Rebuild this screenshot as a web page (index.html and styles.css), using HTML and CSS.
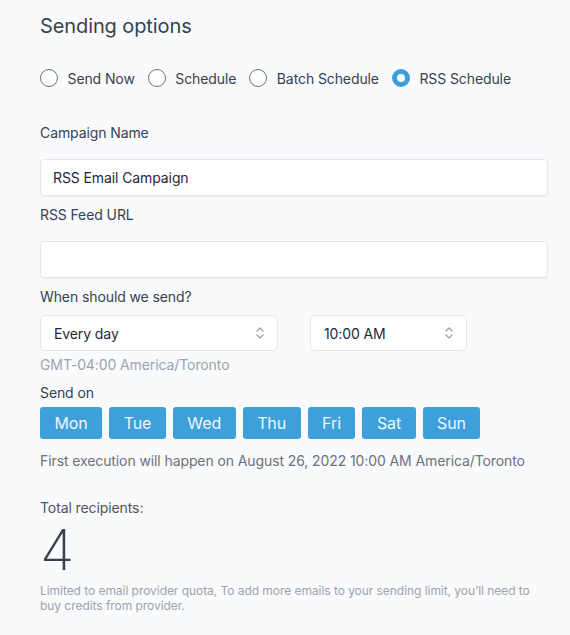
FILE: index.html
```html
<!DOCTYPE html>
<html>
<head>
<meta charset="utf-8">
<link rel="stylesheet" href="styles.css">
</head>
<body>
<div class="page">
  <h2 class="title">Sending options</h2>
  <div class="radios">
    <label class="radio"><span class="dot"></span>Send Now</label>
    <label class="radio"><span class="dot"></span>Schedule</label>
    <label class="radio"><span class="dot"></span>Batch Schedule</label>
    <label class="radio"><span class="dot on"></span>RSS Schedule</label>
  </div>
  <div class="label first">Campaign Name</div>
  <div class="input">RSS Email Campaign</div>
  <div class="label">RSS Feed URL</div>
  <div class="input"></div>
  <div class="label">When should we send?</div>
  <div class="selects">
    <div class="select wide">Every day
      <svg class="chev" width="10" height="14" viewBox="0 0 10 14"><path d="M2 5 L5 2 L8 5 M2 9 L5 12 L8 9" fill="none" stroke="#9ca3af" stroke-width="1.4" stroke-linecap="round" stroke-linejoin="round"/></svg>
    </div>
    <div class="select narrow">10:00 AM
      <svg class="chev" width="10" height="14" viewBox="0 0 10 14"><path d="M2 5 L5 2 L8 5 M2 9 L5 12 L8 9" fill="none" stroke="#9ca3af" stroke-width="1.4" stroke-linecap="round" stroke-linejoin="round"/></svg>
    </div>
  </div>
  <div class="tz">GMT-04:00 America/Toronto</div>
  <div class="label sendon">Send on</div>
  <div class="days">
    <span class="day">Mon</span>
    <span class="day">Tue</span>
    <span class="day">Wed</span>
    <span class="day">Thu</span>
    <span class="day">Fri</span>
    <span class="day">Sat</span>
    <span class="day">Sun</span>
  </div>
  <div class="exec">First execution will happen on August 26, 2022 10:00 AM America/Toronto</div>
  <div class="total">Total recipients:</div>
  <div class="count">4</div>
  <div class="note">Limited to email provider quota, To add more emails to your sending limit, you’ll need to buy credits from provider.</div>
</div>
</body>
</html>
```
FILE: styles.css
```css
html, body {
  margin: 0;
  background: #f9fafb;
}
body {
  font-family: Inter, "Noto Sans", sans-serif;
  color: #374151;
}
.page {
  width: 508px;
  padding: 12px 22px 20px 40px;
}
.title {
  margin: 0;
  font-size: 20px;
  line-height: 28px;
  font-weight: 400;
  letter-spacing: -0.1px;
  color: #374151;
}
.radios {
  margin-top: 26px;
  display: flex;
  align-items: center;
  gap: 13px;
  height: 24px;
}
.radio {
  display: flex;
  align-items: center;
  gap: 9.5px;
  font-size: 14px;
  letter-spacing: -0.1px;
  color: #374151;
}
.dot {
  box-sizing: border-box;
  width: 18px;
  height: 18px;
  border-radius: 50%;
  border: 1px solid #6b7280;
  background: #fff;
}
.dot.on {
  border: 5px solid #3b9fdc;
  background: #fff;
}
.label {
  margin-top: 9px;
  font-size: 14px;
  line-height: 20px;
  letter-spacing: -0.1px;
  color: #374151;
}
.label.first {
  margin-top: 33px;
}
.input {
  box-sizing: border-box;
  margin-top: 16px;
  height: 37px;
  background: #fff;
  border: 1px solid #e5e7eb;
  border-radius: 4px;
  box-shadow: 0 1px 2px rgba(0,0,0,0.05);
  padding: 0 12px;
  display: flex;
  align-items: center;
  font-size: 14px;
  letter-spacing: -0.1px;
  color: #1f2937;
}
.selects {
  margin-top: 8px;
  display: flex;
  gap: 32px;
}
.select {
  box-sizing: border-box;
  height: 36px;
  background: #fff;
  border: 1px solid #e5e7eb;
  border-radius: 5px;
  padding: 0 12px 0 13px;
  display: flex;
  align-items: center;
  justify-content: space-between;
  font-size: 14px;
  letter-spacing: -0.1px;
  color: #1f2937;
}
.select.wide { width: 238px; }
.select.narrow { width: 157px; }
.tz {
  margin-top: 4px;
  font-size: 14px;
  line-height: 20px;
  letter-spacing: -0.1px;
  color: #9ca3af;
}
.label.sendon {
  margin-top: 8px;
}
.days {
  margin-top: 4px;
  display: flex;
  gap: 7px;
}
.day {
  height: 32px;
  padding: 0 14.5px;
  display: flex;
  align-items: center;
  background: #3ea0db;
  border-radius: 3px;
  color: #eef6fc;
  font-size: 16px;
  letter-spacing: -0.1px;
}
.exec {
  margin-top: 12px;
  font-size: 14px;
  line-height: 20px;
  letter-spacing: -0.1px;
  color: #6b7280;
}
.total {
  margin-top: 27px;
  font-size: 14px;
  line-height: 20px;
  letter-spacing: -0.1px;
  color: #4b5563;
}
.count {
  margin-top: 4px;
  font-size: 56px;
  line-height: 56px;
  font-weight: 200;
  color: #374151;
}
.note {
  margin-top: 5px;
  font-size: 12px;
  line-height: 15px;
  letter-spacing: -0.05px;
  color: #9ca3af;
}
```
